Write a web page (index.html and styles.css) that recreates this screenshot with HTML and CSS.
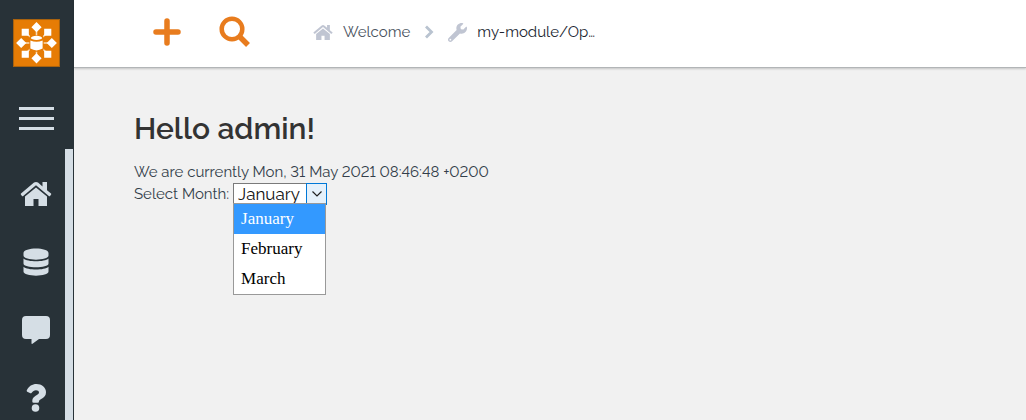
FILE: index.html
```html
<!DOCTYPE html>
<html lang="en">
<head>
<meta charset="utf-8">
<meta name="viewport" content="width=device-width, initial-scale=1">
<title>Hello admin</title>
<link rel="stylesheet" href="styles.css">
</head>
<body>
<div class="app">
  <aside class="sidebar">
    <a class="logo" href="#" aria-label="Home page">
      <svg viewBox="0 0 46 47" width="47" height="48">
        <rect x=".5" y=".5" width="45" height="46" fill="#e67c05" stroke="#a8620f"/>
        <path d="M23 8v31M9 23.500h28M12 13l22 21M34 13L12 34" stroke="#f9dcb8" stroke-width="1.500"/>
        <rect x="16" y="16" width="14" height="16" rx="3" fill="#e67c05"/>
        <g fill="#fff">
          <path d="M23 3l5 5-5 5-5-5zM23 33.500l5 5-5 5-5-5zM8 18.500l5 5-5 5-5-5zM38 18.500l5 5-5 5-5-5z"/>
          <path d="M8.500 9.500h7v7h-7zM30.500 9.500h7v7h-7zM8.500 31h7v7h-7zM30.500 31h7v7h-7z"/>
          <ellipse cx="23" cy="18.500" rx="5.500" ry="2"/>
          <path d="M17 21q6 2.500 12 0v8q-6 3.500-12 0z"/>
        </g>
      </svg>
    </a>
    <button class="burger" type="button" aria-label="Toggle menu"><span></span><span></span><span></span></button>
    <nav class="menu" aria-label="Main">
      <a href="#" aria-label="Welcome">
        <svg viewBox="0 0 32 26" width="32" height="26"><path d="M16 6.500L5 15.500V25h8.500v-7h5v7H27v-9.500zM31 12.500l-4-3.300V1h-4.500v4.400L18 1.600q-2-1.400-4 0L1 12.500q-.6.600 0 1.200l1 1.200q.6.500 1.200 0L16 4.300l12.800 10.600q.6.500 1.200 0l1-1.200q.6-.6 0-1.200z"/></svg>
      </a>
      <a href="#" aria-label="Data">
        <svg viewBox="0 0 26 28" width="26" height="28"><path d="M.5 5C.5-1 25.500-1 25.500 5v2.500c0 5.500-25 5.500-25 0zM.5 10.500c4 3.700 21 3.700 25 0V15.500c0 5-25 5-25 0zM.5 18.800c4 3.700 21 3.700 25 0V23.500c0 5.500-25 5.500-25 0z"/></svg>
      </a>
      <a href="#" aria-label="Messages">
        <svg viewBox="0 0 28 28" width="28" height="28"><path d="M4 0h20q4 0 4 4v15q0 4-4 4h-7l-6.500 4.800q-1 .5-1-.6V23H4q-4 0-4-4V4q0-4 4-4z"/></svg>
      </a>
      <a href="#" aria-label="Help">
        <svg viewBox="0 0 20 28" width="20" height="28"><path d="M.8 6.300C3 2.200 6 0 10.500 0 15.500 0 20 3.500 20 8.300c0 6.500-7 6.600-7 9v.2q0 1.300-1.300 1.300H7.600q-1.300 0-1.300-1.300v-.7c0-5.300 6.700-5.200 6.700-8.300 0-1.400-1.300-2.300-3-2.300-2 0-3 .9-4.300 2.500q-.8 1-1.800.3L1.200 7.800Q.3 7.200.8 6.300z"/><circle cx="9.500" cy="24" r="3.800"/></svg>
      </a>
      <span class="thumb"></span>
    </nav>
  </aside>
  <div class="page">
    <header class="topbar">
      <button class="tool" type="button" aria-label="New">
        <svg viewBox="0 0 28 28" width="28" height="28"><path d="M14 3v22M3 14h22" stroke="currentColor" stroke-width="5.500" stroke-linecap="round"/></svg>
      </button>
      <button class="tool search" type="button" aria-label="Search">
        <svg viewBox="0 0 32 32" width="32" height="32" fill="none" stroke="currentColor"><circle cx="13" cy="13" r="10.300" stroke-width="4.500"/><path d="M20.500 20.500l8.500 8.500" stroke-width="5.500"/></svg>
      </button>
      <nav class="crumbs" aria-label="Breadcrumb">
        <a href="#"><svg viewBox="0 0 32 26" width="20" height="17"><path d="M16 6.500L5 15.500V25h8.500v-7h5v7H27v-9.500zM31 12.500l-4-3.300V1h-4.500v4.400L18 1.600q-2-1.400-4 0L1 12.500q-.6.600 0 1.200l1 1.200q.6.500 1.200 0L16 4.300l12.800 10.600q.6.500 1.200 0l1-1.200q.6-.6 0-1.200z"/></svg>Welcome</a>
        <svg class="sep" viewBox="0 0 10 14" width="10" height="14"><path d="M2 1.500L7.500 7 2 12.500" fill="none" stroke="#b9c3d0" stroke-width="2.800"/></svg>
        <a class="current" href="#"><svg viewBox="0 0 512 512" width="19" height="19"><path d="M507.730 109.100c-2.240-9.030-13.540-12.090-20.120-5.510l-74.360 74.360-67.880-11.310-11.310-67.880 74.360-74.360c6.620-6.620 3.430-17.900-5.660-20.160-47.380-11.740-99.550.91-136.580 37.930-39.640 39.640-50.550 97.100-34.050 147.200L18.740 402.760c-24.990 24.990-24.990 65.510 0 90.500 24.990 24.990 65.510 24.990 90.500 0l213.210-213.210c50.120 16.710 107.470 5.680 147.370-34.220 37.070-37.070 49.700-89.320 37.910-136.730zM64 472c-13.250 0-24-10.750-24-24 0-13.260 10.750-24 24-24s24 10.740 24 24c0 13.250-10.750 24-24 24z"/></svg>my-module/Op…</a>
      </nav>
    </header>
    <main class="content">
      <h1>Hello admin!</h1>
      <p>We are currently Mon, 31 May 2021 08:46:48 +0200</p>
      <div class="field">
        <label for="month">Select Month:</label>
        <div class="picker">
          <select id="month"><option>January</option><option>February</option><option>March</option></select>
          <span class="arrow"><svg viewBox="0 0 10 6" width="10" height="6"><path d="M.5.500L5 5 9.500.500" fill="none" stroke="#222" stroke-width="1.200"/></svg></span>
          <ul class="options"><li class="active">January</li><li>February</li><li>March</li></ul>
        </div>
      </div>
    </main>
  </div>
</div>
</body>
</html>
```
FILE: styles.css
```css
* { box-sizing: border-box; }
body { margin: 0; background: #f1f1f1; color: #333e4a; font-family: Raleway, Lato, sans-serif; font-size: 15px; font-variant-numeric: lining-nums; }
a { color: inherit; text-decoration: none; }
button { border: 0; padding: 0; background: none; color: inherit; }
svg { display: block; flex: none; }
.app { display: flex; height: 100vh; overflow: hidden; }
.sidebar { flex: none; width: 74px; display: flex; flex-direction: column; background: #283238; color: #d5dee5; }
.logo { margin: 19px 0 0 13px; }
.burger { display: flex; flex-direction: column; gap: 7px; width: 35px; margin: 40px 0 19px 19px; }
.burger span { height: 3px; background: #d5dee5; }
.menu { position: relative; flex: 1; min-height: 0; overflow: hidden; display: flex; flex-direction: column; padding-top: 11px; }
.menu a { flex: none; height: 68px; width: 72px; display: flex; align-items: center; justify-content: center; }
.menu svg, .crumbs a svg { fill: currentColor; }
.thumb { position: absolute; top: 0; bottom: 0; right: 1px; width: 8px; background: #d5dee5; }
.page { flex: 1; min-width: 0; }
.topbar { display: flex; align-items: center; height: 68px; padding: 0 79px 3px; background: #fff; border-bottom: 1px solid #b2b5b7; box-shadow: 0 1px 2px #00000030; }
.tool { color: #e87c1e; }
.search { margin-left: 38px; }
.crumbs { display: flex; align-items: center; margin-left: 62px; }
.crumbs a { display: flex; align-items: center; gap: 10px; color: #4a5360; }
.crumbs .current { color: #20252f; }
.crumbs a svg { color: #c0c5d2; }
.sep { margin: 0 14px; }
.content { padding: 43px 60px; }
h1 { margin: 0 0 14px; font-size: 30px; line-height: 36px; font-weight: 600; color: #333; }
p { margin: 0; line-height: 22px; }
.field { display: flex; align-items: center; gap: 4px; line-height: 22px; }
.picker { position: relative; display: flex; width: 94px; height: 22px; }
select { appearance: none; width: 100%; height: 22px; padding: 0 22px 0 4px; border: 1px solid #7a7a7a; border-radius: 0; background: #fff; color: #111; font-family: inherit; font-size: 17px; line-height: 20px; }
.arrow { position: absolute; top: 0; right: 0; width: 21px; height: 22px; display: flex; align-items: center; justify-content: center; background: #e5f1fb; border: 1px solid #0078d7; pointer-events: none; }
.options { position: absolute; top: 20px; left: 0; width: 93px; margin: 0; padding: 0; list-style: none; border: 1px solid #999; background: #fff; color: #000; font: 17px/30px "Liberation Serif", serif; }
.options li { padding-left: 7px; }
.options .active { background: #3399ff; color: #fff; }
```
